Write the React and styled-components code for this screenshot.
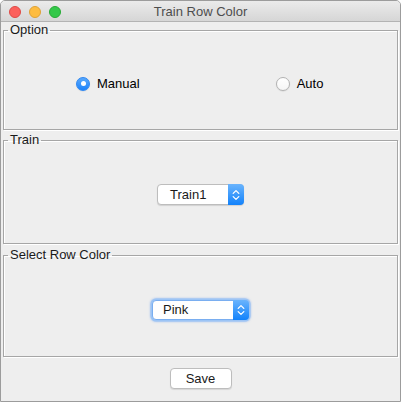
import React, { useState } from "react";
import styled, { createGlobalStyle } from "styled-components";

const GlobalStyle = createGlobalStyle`
  html, body {
    margin: 0;
    padding: 0;
    background: #ffffff;
  }
  body {
    font-family: "Liberation Sans", Arial, sans-serif;
    font-size: 13px;
    color: #000;
  }
`;

const Window = styled.div`
  width: 401px;
  height: 402px;
  box-sizing: border-box;
  border: 1px solid #9c9c9c;
  border-radius: 5px 5px 0 0;
  background: #eeeeee;
  overflow: hidden;
  display: flex;
  flex-direction: column;
`;

const TitleBar = styled.div`
  height: 20px;
  flex-shrink: 0;
  border-bottom: 1px solid #b3b3b3;
  background: linear-gradient(#ebebeb, #d6d6d6);
  display: flex;
  align-items: center;
  position: relative;
  padding-left: 8px;
`;

const Lights = styled.div`
  display: flex;
  gap: 8px;
  margin-top: 2px;
`;

const Light = styled.span`
  width: 12px;
  height: 12px;
  border-radius: 50%;
  box-sizing: border-box;
  background: ${(p) => p.color};
  border: 0.5px solid ${(p) => p.edge};
`;

const Title = styled.div`
  position: absolute;
  left: 0;
  right: 0;
  top: 3px;
  text-align: center;
  color: #4d4d4d;
  font-size: 13px;
  line-height: 16px;
  pointer-events: none;
`;

const Content = styled.div`
  flex: 1;
  padding: 0 2px;
  display: flex;
  flex-direction: column;
`;

const Group = styled.fieldset`
  margin: 0 0 ${(p) => p.gap || 0}px 0;
  padding: 0;
  height: ${(p) => p.height}px;
  box-sizing: border-box;
  min-width: 0;
  border: 1px solid #a6a6a6;
  box-shadow: 1px 1px 0 #ffffff, inset 1px 1px 0 #ffffff;
`;

const Legend = styled.legend`
  margin-left: 4px;
  padding: 0 2px;
  font-size: 13px;
  line-height: 16px;
  color: #1a1a1a;
`;

const GroupBody = styled.div`
  height: ${(p) => p.height}px;
  display: flex;
  align-items: center;
  justify-content: ${(p) => p.justify || "center"};
  padding-left: ${(p) => p.indent || 0}px;
`;

const RadioRow = styled.div`
  display: flex;
  align-items: center;
  gap: 136px;
`;

const RadioLabel = styled.label`
  display: flex;
  align-items: center;
  gap: 7px;
  cursor: default;
  line-height: 16px;
`;

const RadioDot = styled.span`
  width: 14px;
  height: 14px;
  box-sizing: border-box;
  border-radius: 50%;
  display: flex;
  align-items: center;
  justify-content: center;
  background: ${(p) =>
    p.checked ? "linear-gradient(#5aa9fc, #1c83fb)" : "linear-gradient(#ffffff, #f6f6f6)"};
  border: 1px solid ${(p) => (p.checked ? "#2c86f2" : "#b2b2b2")};
  box-shadow: 0 0.5px 1px rgba(0, 0, 0, 0.12);

  &::after {
    content: "";
    display: ${(p) => (p.checked ? "block" : "none")};
    width: 5px;
    height: 5px;
    border-radius: 50%;
    background: #ffffff;
  }
`;

const Combo = styled.div`
  width: ${(p) => p.width}px;
  height: ${(p) => p.height}px;
  box-sizing: border-box;
  display: flex;
  border-radius: 4px;
  background: #ffffff;
  border: 1px solid ${(p) => (p.focused ? "#7aaef0" : "#bdbdbd")};
  box-shadow: ${(p) =>
    p.focused
      ? "0 0 0 1.5px #9cc4f5, 0 0 2px 2px rgba(120, 170, 240, 0.55)"
      : "0 1px 1px rgba(0, 0, 0, 0.12)"};
`;

const ComboText = styled.div`
  flex: 1;
  display: flex;
  align-items: center;
  padding-left: ${(p) => p.pad}px;
  font-size: 13px;
  color: #1a1a1a;
`;

const ComboArrow = styled.div`
  width: 16px;
  margin: -1px -1px -1px 0;
  border-radius: 0 4px 4px 0;
  background: linear-gradient(#6ab4fd, #1282fb);
  display: flex;
  align-items: center;
  justify-content: center;
`;

const Footer = styled.div`
  display: flex;
  justify-content: center;
  padding-top: 11px;
`;

const Button = styled.button`
  width: 62px;
  height: 21px;
  box-sizing: border-box;
  padding: 0;
  border: 1px solid #bdbdbd;
  border-radius: 4px;
  background: #ffffff;
  box-shadow: 0 1px 1px rgba(0, 0, 0, 0.1);
  font-family: "Liberation Sans", Arial, sans-serif;
  font-size: 13px;
  color: #1a1a1a;
`;

function Chevrons() {
  return (
    <svg width="8" height="12" viewBox="0 0 8 12">
      <path d="M1.2 4.4 L4 1.6 L6.8 4.4" fill="none" stroke="#fff" strokeWidth="1.3" strokeLinecap="round" strokeLinejoin="round" />
      <path d="M1.2 7.6 L4 10.4 L6.8 7.6" fill="none" stroke="#fff" strokeWidth="1.3" strokeLinecap="round" strokeLinejoin="round" />
    </svg>
  );
}

function Radio({ checked, label, onPick }) {
  return (
    <RadioLabel onClick={onPick}>
      <RadioDot checked={checked} />
      {label}
    </RadioLabel>
  );
}

export default function App() {
  const [mode, setMode] = useState("manual");

  return (
    <>
      <GlobalStyle />
      <Window>
        <TitleBar>
          <Lights>
            <Light color="#fc605c" edge="#de4a46" />
            <Light color="#fdbc40" edge="#dea236" />
            <Light color="#34c84a" edge="#27aa35" />
          </Lights>
          <Title>Train Row Color</Title>
        </TitleBar>
        <Content>
          <Group height={108} gap={2}>
            <Legend>Option</Legend>
            <GroupBody height={91} justify="flex-start" indent={72}>
              <RadioRow>
                <Radio checked={mode === "manual"} label="Manual" onPick={() => setMode("manual")} />
                <Radio checked={mode === "auto"} label="Auto" onPick={() => setMode("auto")} />
              </RadioRow>
            </GroupBody>
          </Group>
          <Group height={112} gap={3}>
            <Legend>Train</Legend>
            <GroupBody height={93}>
              <Combo width={87} height={21}>
                <ComboText pad={12}>Train1</ComboText>
                <ComboArrow>
                  <Chevrons />
                </ComboArrow>
              </Combo>
            </GroupBody>
          </Group>
          <Group height={110}>
            <Legend>Select Row Color</Legend>
            <GroupBody height={93}>
              <Combo width={97} height={20} focused>
                <ComboText pad={10}>Pink</ComboText>
                <ComboArrow>
                  <Chevrons />
                </ComboArrow>
              </Combo>
            </GroupBody>
          </Group>
          <Footer>
            <Button>Save</Button>
          </Footer>
        </Content>
      </Window>
    </>
  );
}
